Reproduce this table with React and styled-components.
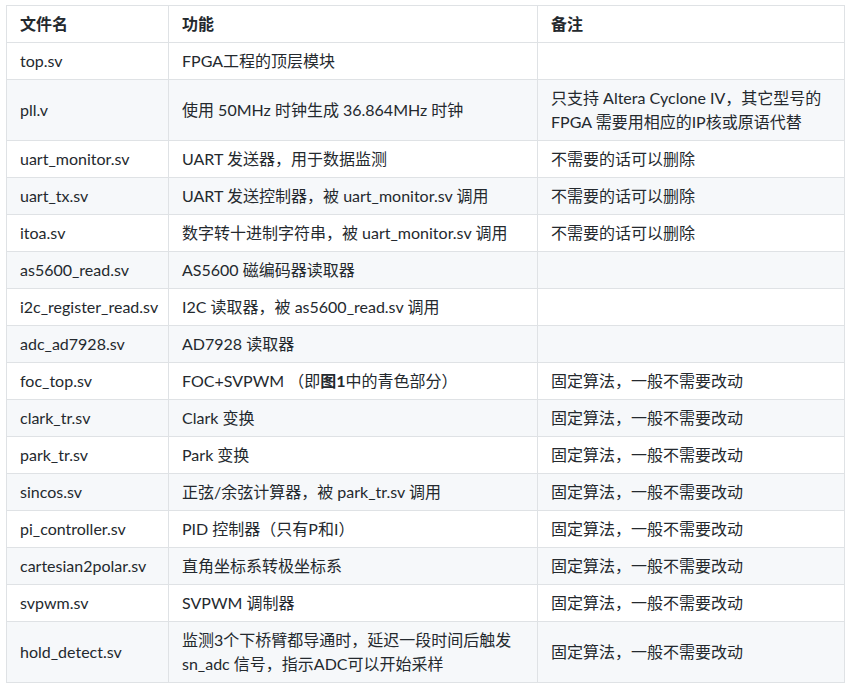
import React from 'react';
import styled, { createGlobalStyle } from 'styled-components';

const GlobalStyle = createGlobalStyle`
  html, body {
    margin: 0;
    padding: 0;
    background: #fff;
  }
  body {
    font-family: Lato, "Noto Sans CJK SC", sans-serif;
    color: #24292e;
  }
`;

const Page = styled.div`
  padding: 5px 6px;
`;

const Table = styled.table`
  border-collapse: collapse;
  border-spacing: 0;
  width: 838px;
  table-layout: fixed;
  font-size: 16px;
  line-height: 24px;
`;

const Row = styled.tr`
  background: #fff;
  border-top: 1px solid #c6cbd1;

  tbody &:nth-child(2n) {
    background: #f6f8fa;
  }
`;

const Head = styled.th`
  padding: 6px 13px;
  border: 1px solid #dfe2e5;
  text-align: left;
  font-weight: 700;
`;

const Cell = styled.td`
  padding: 6px 13px;
  border: 1px solid #dfe2e5;
  vertical-align: middle;
`;

const rows = [
  ['top.sv', 'FPGA工程的顶层模块', ''],
  ['pll.v', '使用 50MHz 时钟生成 36.864MHz 时钟', '只支持 Altera Cyclone IV，其它型号的 FPGA 需要用相应的IP核或原语代替'],
  ['uart_monitor.sv', 'UART 发送器，用于数据监测', '不需要的话可以删除'],
  ['uart_tx.sv', 'UART 发送控制器，被 uart_monitor.sv 调用', '不需要的话可以删除'],
  ['itoa.sv', '数字转十进制字符串，被 uart_monitor.sv 调用', '不需要的话可以删除'],
  ['as5600_read.sv', 'AS5600 磁编码器读取器', ''],
  ['i2c_register_read.sv', 'I2C 读取器，被 as5600_read.sv 调用', ''],
  ['adc_ad7928.sv', 'AD7928 读取器', ''],
  ['foc_top.sv', <>FOC+SVPWM （即<strong>图1</strong>中的青色部分）</>, '固定算法，一般不需要改动'],
  ['clark_tr.sv', 'Clark 变换', '固定算法，一般不需要改动'],
  ['park_tr.sv', 'Park 变换', '固定算法，一般不需要改动'],
  ['sincos.sv', '正弦/余弦计算器，被 park_tr.sv 调用', '固定算法，一般不需要改动'],
  ['pi_controller.sv', 'PID 控制器（只有P和I）', '固定算法，一般不需要改动'],
  ['cartesian2polar.sv', '直角坐标系转极坐标系', '固定算法，一般不需要改动'],
  ['svpwm.sv', 'SVPWM 调制器', '固定算法，一般不需要改动'],
  ['hold_detect.sv', '监测3个下桥臂都导通时，延迟一段时间后触发 sn_adc 信号，指示ADC可以开始采样', '固定算法，一般不需要改动'],
];

export default function App() {
  return (
    <>
      <GlobalStyle />
      <Page>
        <Table>
          <colgroup>
            <col style={{ width: 162 }} />
            <col style={{ width: 369 }} />
            <col style={{ width: 307 }} />
          </colgroup>
          <thead>
            <Row>
              <Head>文件名</Head>
              <Head>功能</Head>
              <Head>备注</Head>
            </Row>
          </thead>
          <tbody>
            {rows.map(([file, func, note]) => (
              <Row key={file}>
                <Cell>{file}</Cell>
                <Cell>{func}</Cell>
                <Cell>{note}</Cell>
              </Row>
            ))}
          </tbody>
        </Table>
      </Page>
    </>
  );
}
